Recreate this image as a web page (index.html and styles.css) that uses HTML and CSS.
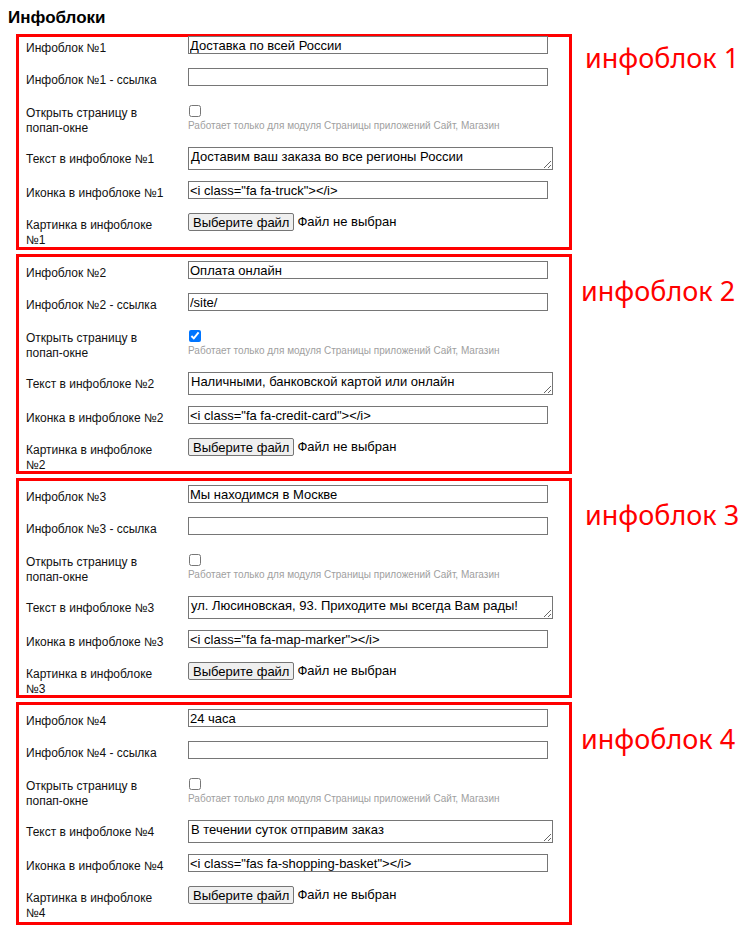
FILE: index.html
```html
<!DOCTYPE html>
<html lang="ru">
<head>
  <meta charset="UTF-8" />
  <meta name="viewport" content="width=device-width, initial-scale=1.0"/>
  <title>Инфоблоки</title>
  <link rel="stylesheet" href="styles.css">
</head>
<body>
  <h3 class="page-title">Инфоблоки</h3>

  <form class="infoblocks">
    <div class="infoblock infoblock-first">
      <div class="frame">
        <div class="fields">
          <label class="field-label">Инфоблок №1</label>
          <div class="field"><input type="text" class="text-input" value="Доставка по всей России" /></div>

          <label class="field-label">Инфоблок №1 - ссылка</label>
          <div class="field"><input type="text" class="text-input" value="" /></div>

          <label class="field-label field-label-top">Открыть страницу в попап-окне</label>
          <div class="field">
            <input type="checkbox" class="check" />
            <div class="hint">Работает только для модуля Страницы приложений Сайт, Магазин</div>
          </div>

          <label class="field-label">Текст в инфоблоке №1</label>
          <div class="field"><textarea class="text-area" rows="1">Доставим ваш заказа во все регионы России</textarea></div>

          <label class="field-label">Иконка в инфоблоке №1</label>
          <div class="field"><input type="text" class="text-input" value="&lt;i class=&quot;fa fa-truck&quot;&gt;&lt;/i&gt;" /></div>

          <label class="field-label">Картинка в инфоблоке №1</label>
          <div class="field">
            <button type="button" class="file-button">Выберите файл</button><span class="file-name">Файл не выбран</span>
          </div>
        </div>
      </div>
      <span class="note">инфоблок 1</span>
    </div>

    <div class="infoblock">
      <div class="frame">
        <div class="fields">
          <label class="field-label">Инфоблок №2</label>
          <div class="field"><input type="text" class="text-input" value="Оплата онлайн" /></div>

          <label class="field-label">Инфоблок №2 - ссылка</label>
          <div class="field"><input type="text" class="text-input" value="/site/" /></div>

          <label class="field-label field-label-top">Открыть страницу в попап-окне</label>
          <div class="field">
            <input type="checkbox" class="check" checked />
            <div class="hint">Работает только для модуля Страницы приложений Сайт, Магазин</div>
          </div>

          <label class="field-label">Текст в инфоблоке №2</label>
          <div class="field"><textarea class="text-area" rows="1">Наличными, банковской картой или онлайн</textarea></div>

          <label class="field-label">Иконка в инфоблоке №2</label>
          <div class="field"><input type="text" class="text-input" value="&lt;i class=&quot;fa fa-credit-card&quot;&gt;&lt;/i&gt;" /></div>

          <label class="field-label">Картинка в инфоблоке №2</label>
          <div class="field">
            <button type="button" class="file-button">Выберите файл</button><span class="file-name">Файл не выбран</span>
          </div>
        </div>
      </div>
      <span class="note note-left">инфоблок 2</span>
    </div>

    <div class="infoblock">
      <div class="frame">
        <div class="fields">
          <label class="field-label">Инфоблок №3</label>
          <div class="field"><input type="text" class="text-input" value="Мы находимся в Москве" /></div>

          <label class="field-label">Инфоблок №3 - ссылка</label>
          <div class="field"><input type="text" class="text-input" value="" /></div>

          <label class="field-label field-label-top">Открыть страницу в попап-окне</label>
          <div class="field">
            <input type="checkbox" class="check" />
            <div class="hint">Работает только для модуля Страницы приложений Сайт, Магазин</div>
          </div>

          <label class="field-label">Текст в инфоблоке №3</label>
          <div class="field"><textarea class="text-area" rows="1">ул. Люсиновская, 93. Приходите мы всегда Вам рады!</textarea></div>

          <label class="field-label">Иконка в инфоблоке №3</label>
          <div class="field"><input type="text" class="text-input" value="&lt;i class=&quot;fa fa-map-marker&quot;&gt;&lt;/i&gt;" /></div>

          <label class="field-label">Картинка в инфоблоке №3</label>
          <div class="field">
            <button type="button" class="file-button">Выберите файл</button><span class="file-name">Файл не выбран</span>
          </div>
        </div>
      </div>
      <span class="note">инфоблок 3</span>
    </div>

    <div class="infoblock infoblock-last">
      <div class="frame">
        <div class="fields">
          <label class="field-label">Инфоблок №4</label>
          <div class="field"><input type="text" class="text-input" value="24 часа" /></div>

          <label class="field-label">Инфоблок №4 - ссылка</label>
          <div class="field"><input type="text" class="text-input" value="" /></div>

          <label class="field-label field-label-top">Открыть страницу в попап-окне</label>
          <div class="field">
            <input type="checkbox" class="check" />
            <div class="hint">Работает только для модуля Страницы приложений Сайт, Магазин</div>
          </div>

          <label class="field-label">Текст в инфоблоке №4</label>
          <div class="field"><textarea class="text-area" rows="1">В течении суток отправим заказ</textarea></div>

          <label class="field-label">Иконка в инфоблоке №4</label>
          <div class="field"><input type="text" class="text-input" value="&lt;i class=&quot;fas fa-shopping-basket&quot;&gt;&lt;/i&gt;" /></div>

          <label class="field-label">Картинка в инфоблоке №4</label>
          <div class="field">
            <button type="button" class="file-button">Выберите файл</button><span class="file-name">Файл не выбран</span>
          </div>
        </div>
      </div>
      <span class="note note-left">инфоблок 4</span>
    </div>
  </form>
</body>
</html>
```

FILE: styles.css
```css
body {
  margin: 8px;
  font-family: "Liberation Sans", Arial, sans-serif;
  font-size: 13px;
  color: #111;
  background-color: #ffffff;
}

.page-title {
  font-size: 17px;
  font-weight: bold;
  line-height: 20px;
  margin: 0 0 6px;
  color: #000;
}

.infoblocks {
  margin: 0;
}

.infoblock {
  display: flex;
  align-items: flex-start;
  margin: 0 0 4px 8px;
}

/* red annotation frame round each group of fields */
.frame {
  width: 556px;
  box-sizing: border-box;
  border: 3px solid #ff0000;
  padding: 4px 7px 0;
}

.infoblock-first .frame {
  padding-top: 0;
  padding-bottom: 1px;
}

.infoblock-first .fields {
  margin-top: -1px;
}

.infoblock-last .frame {
  padding-bottom: 3px;
}

.fields {
  display: grid;
  grid-template-columns: 142px 1fr;
  grid-template-rows: 32px 37px 42px 34px 32px 33px;
  column-gap: 20px;
}

.field-label {
  padding-top: 5px;
  font-size: 12px;
  line-height: 15px;
}

.field-label-top {
  padding-top: 1px;
}

.text-input {
  display: block;
  box-sizing: border-box;
  width: 360px;
  height: 18px;
  margin: 0;
  padding: 0 1px;
  border: 1px solid #767676;
  font-family: "Liberation Sans", Arial, sans-serif;
  font-size: 13px;
  color: #000;
}

.text-area {
  display: block;
  box-sizing: border-box;
  width: 365px;
  height: 23px;
  margin: 0;
  padding: 1px 2px;
  border: 1px solid #767676;
  font-family: "Liberation Sans", Arial, sans-serif;
  font-size: 13px;
  line-height: 15px;
  color: #000;
  resize: vertical;
  overflow: hidden;
}

.check {
  display: block;
  width: 12px;
  height: 12px;
  margin: 0 0 0 1px;
}

.hint {
  margin-top: 3px;
  font-size: 10px;
  line-height: 12px;
  color: #a0a0a0;
}

.file-button {
  height: 18px;
  margin: 0;
  padding: 0 4px;
  border: 1px solid #767676;
  border-radius: 2px;
  background-color: #efefef;
  font-family: "Liberation Sans", Arial, sans-serif;
  font-size: 13px;
  color: #000;
  vertical-align: top;
}

.file-name {
  margin-left: 3px;
  line-height: 18px;
  color: #000;
}

.note {
  margin: 19px 0 0 13px;
  font-family: "Noto Sans", sans-serif;
  font-size: 27px;
  line-height: 35px;
  color: #ff0000;
  white-space: nowrap;
}

.note-left {
  margin-left: 9px;
}

.infoblock-first .note {
  margin-top: 6px;
}
```
